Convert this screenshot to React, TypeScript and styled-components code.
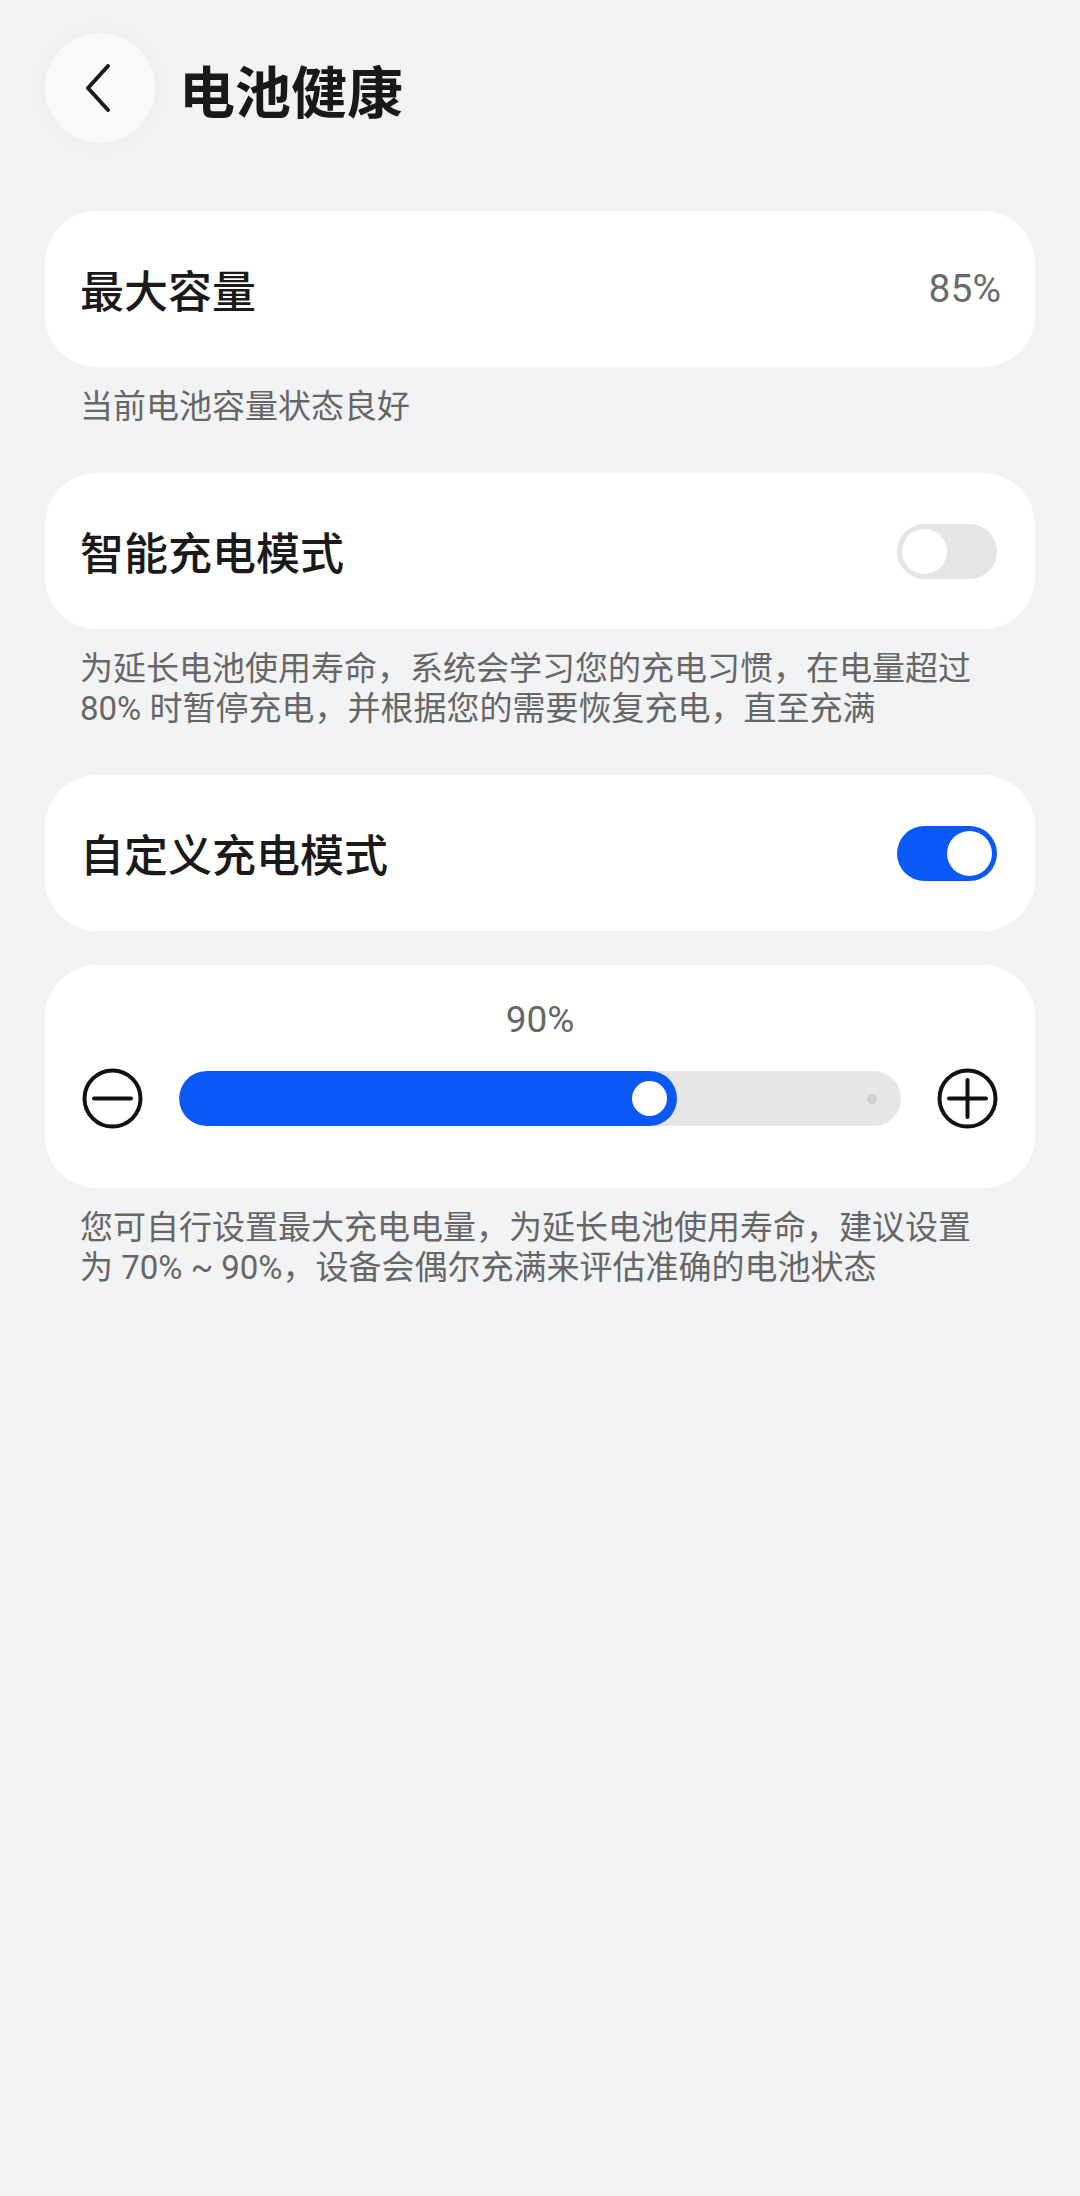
import React, { FC } from 'react';
import styled, { createGlobalStyle } from 'styled-components';

const GlobalStyle = createGlobalStyle`
    html, body {
        margin: 0;
        padding: 0;
        background: #f1f2f4;
        min-height: 100%;
    }
    body {
        font-family: Roboto, 'Noto Sans CJK SC', sans-serif;
        -webkit-font-smoothing: antialiased;
    }
`;

const Page = styled.div`
    min-height: 2196px;
    box-sizing: border-box;
    padding: 33px 45px 0;
    background: #f1f2f4;
`;

const Header = styled.header`
    display: flex;
    align-items: center;
    gap: 24px;
    height: 110px;
    margin-bottom: 68px;
`;

const BackButton = styled.button`
    width: 110px;
    height: 110px;
    border: none;
    border-radius: 50%;
    background: #f8f9fb;
    box-shadow: 0 0 28px rgba(0, 0, 0, 0.035);
    display: flex;
    align-items: center;
    justify-content: center;
    padding: 0;
    padding-right: 4px;
`;

const Title = styled.h1`
    margin: 0;
    font-size: 56px;
    font-weight: 700;
    color: #191919;
    letter-spacing: 0;
`;

const Card = styled.div`
    background: #ffffff;
    border-radius: 52px;
    box-sizing: border-box;
`;

const Row = styled(Card)`
    height: 156px;
    display: flex;
    align-items: center;
    justify-content: space-between;
    padding: 0 38px 0 35px;
`;

const RowLabel = styled.span`
    font-size: 44px;
    font-weight: 500;
    color: #1a1a1a;
`;

const RowValue = styled.span`
    font-size: 39px;
    color: #6a6a6a;
    margin-right: -4px;
`;

const Note = styled.p<{ $last?: boolean }>`
    margin: 20px 0 ${(p) => (p.$last ? '0' : '46px')};
    padding: 0 35px;
    font-size: 33px;
    line-height: 40px;
    color: #666666;
`;

const Group = styled.div`
    display: flex;
    flex-direction: column;
    gap: 34px;
`;

const Switch = styled.div<{ $on?: boolean }>`
    position: relative;
    width: 100px;
    height: 55px;
    border-radius: 28px;
    background: ${(p) => (p.$on ? '#0a59f7' : '#e5e5e5')};

    &::after {
        content: '';
        position: absolute;
        top: 5px;
        left: ${(p) => (p.$on ? '50px' : '5px')};
        width: 45px;
        height: 45px;
        border-radius: 50%;
        background: #ffffff;
    }
`;

const SliderCard = styled(Card)`
    padding: 32px 37px 59px;
    display: flex;
    flex-direction: column;
    align-items: center;
`;

const SliderValue = styled.div`
    font-size: 37px;
    line-height: 46px;
    color: #666666;
    margin-bottom: 25px;
`;

const SliderRow = styled.div`
    width: 100%;
    display: flex;
    align-items: center;
    gap: 36px;
`;

const Track = styled.div`
    position: relative;
    flex: 1;
    height: 55px;
    border-radius: 28px;
    background: #e6e6e6;
    overflow: hidden;
`;

const Fill = styled.div`
    position: absolute;
    left: 0;
    top: 0;
    bottom: 0;
    border-radius: 28px;
    background: #0a59f7;
`;

const Thumb = styled.div`
    position: absolute;
    right: 10px;
    top: 10px;
    width: 35px;
    height: 35px;
    border-radius: 50%;
    background: #ffffff;
`;

const EndDot = styled.div`
    position: absolute;
    right: 24px;
    top: 23px;
    width: 10px;
    height: 10px;
    border-radius: 50%;
    background: #cfcfcf;
`;

const IconButton = styled.div`
    width: 61px;
    height: 61px;
    flex: none;
    display: flex;
    align-items: center;
    justify-content: center;
`;

const ChevronLeft: FC = () => (
    <svg width='30' height='50' viewBox='0 0 30 50'>
        <path
            d='M25 3 L5 25 L25 47'
            fill='none'
            stroke='#1a1a1a'
            strokeWidth='4'
            strokeLinecap='round'
            strokeLinejoin='round'
        />
    </svg>
);

const RoundIcon: FC<{ plus?: boolean }> = ({ plus }) => (
    <svg width='61' height='61' viewBox='0 0 61 61'>
        <circle cx='30.5' cy='30.5' r='28' fill='none' stroke='#111' strokeWidth='4' />
        <line x1='12' y1='30.5' x2='49' y2='30.5' stroke='#111' strokeWidth='4' strokeLinecap='round' />
        {plus && <line x1='30.5' y1='12' x2='30.5' y2='49' stroke='#111' strokeWidth='4' strokeLinecap='round' />}
    </svg>
);

export default function App() {
    const fillRatio = 0.69;

    return (
        <>
            <GlobalStyle />
            <Page>
                <Header>
                    <BackButton aria-label='返回'>
                        <ChevronLeft />
                    </BackButton>
                    <Title>电池健康</Title>
                </Header>

                <Row>
                    <RowLabel>最大容量</RowLabel>
                    <RowValue>85%</RowValue>
                </Row>
                <Note>当前电池容量状态良好</Note>

                <Row>
                    <RowLabel>智能充电模式</RowLabel>
                    <Switch />
                </Row>
                <Note>
                    为延长电池使用寿命，系统会学习您的充电习惯，在电量超过
                    <br />
                    80% 时暂停充电，并根据您的需要恢复充电，直至充满
                </Note>

                <Group>
                    <Row>
                        <RowLabel>自定义充电模式</RowLabel>
                        <Switch $on />
                    </Row>
                    <SliderCard>
                        <SliderValue>90%</SliderValue>
                        <SliderRow>
                            <IconButton>
                                <RoundIcon />
                            </IconButton>
                            <Track>
                                <EndDot />
                                <Fill style={{ width: `${fillRatio * 100}%` }}>
                                    <Thumb />
                                </Fill>
                            </Track>
                            <IconButton>
                                <RoundIcon plus />
                            </IconButton>
                        </SliderRow>
                    </SliderCard>
                </Group>
                <Note $last>
                    您可自行设置最大充电电量，为延长电池使用寿命，建议设置
                    <br />
                    为 70% ~ 90%，设备会偶尔充满来评估准确的电池状态
                </Note>
            </Page>
        </>
    );
}
